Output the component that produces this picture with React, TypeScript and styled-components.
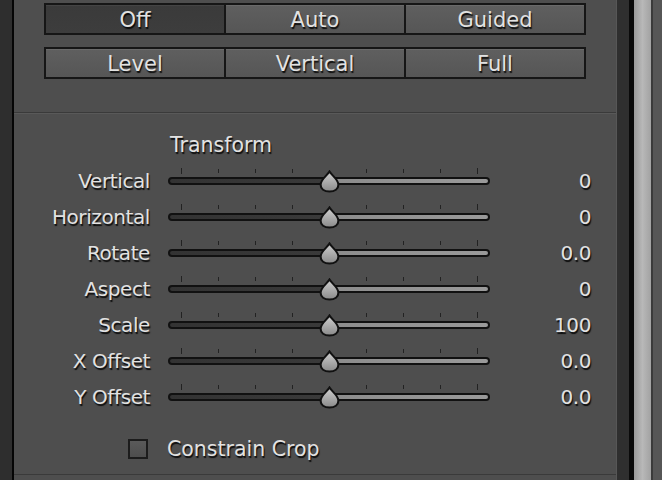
import styled, { createGlobalStyle } from 'styled-components';

const GlobalStyle = createGlobalStyle`
  *, *::before, *::after {
    box-sizing: border-box;
  }
  html, body {
    margin: 0;
    padding: 0;
    background: #4e4e4e;
  }
  body {
    font-family: "DejaVu Sans", "Liberation Sans", sans-serif;
  }
`;

const shadow = '1px 2px 1px rgba(0, 0, 0, 0.85)';

const Frame = styled.div`
  display: flex;
  width: 662px;
  height: 480px;
  overflow: hidden;
`;

const LeftEdge = styled.div`
  width: 14px;
  background: #2e2e2e;
  border-right: 2px solid #050505;
`;

const RightEdge = styled.div`
  display: flex;
  width: 45px;
`;

const Strip = styled.div<{ $w: number; $bg: string }>`
  width: ${(p) => p.$w}px;
  background: ${(p) => p.$bg};
`;

const Panel = styled.div`
  flex: 1;
  display: flex;
  flex-direction: column;
  background: #4e4e4e;
  border-right: 1px solid #575757;
`;

const TopSection = styled.div`
  display: flex;
  flex-direction: column;
  gap: 12px;
  padding: 3px 30px 33px;
  border-bottom: 1px solid #3a3a3a;
  box-shadow: 0 1px 0 #595959;
`;

const ButtonGroup = styled.div`
  display: grid;
  grid-template-columns: repeat(3, 1fr);
  height: 32px;
  border: 2px solid #161616;
  background: #161616;
  gap: 2px;
`;

const SegButton = styled.div<{ $active?: boolean }>`
  display: flex;
  align-items: center;
  justify-content: center;
  padding-top: 2px;
  font-size: 21px;
  color: #e2e2e2;
  text-shadow: ${shadow};
  box-shadow: inset 0 1px 0 ${(p) => (p.$active ? '#444' : '#6a6a6a')};
  background: ${(p) =>
    p.$active
      ? 'linear-gradient(#3a3a3a, #3d3d3d)'
      : 'linear-gradient(#5f5f5f, #565656)'};
`;

const TransformSection = styled.div`
  display: flex;
  flex-direction: column;
  padding-top: 20px;
  border-bottom: 1px solid #3a3a3a;
  height: 362px;
`;

const SectionTitle = styled.div`
  height: 24px;
  line-height: 24px;
  padding-left: 156px;
  font-size: 20.5px;
  color: #e2e2e2;
  text-shadow: ${shadow};
  margin-bottom: 5px;
`;

const Row = styled.div`
  display: grid;
  grid-template-columns: 136px 322px 83px;
  column-gap: 18px;
  height: 36px;
  align-items: center;
`;

const Label = styled.div`
  text-align: right;
  font-size: 20px;
  letter-spacing: -0.4px;
  line-height: 36px;
  padding-top: 1px;
  color: #e2e2e2;
  text-shadow: ${shadow};
`;

const SliderBox = styled.div`
  position: relative;
  height: 36px;
`;

const Ticks = styled.div`
  display: flex;
  justify-content: space-between;
  padding: 0 12px 0 13px;
  height: 11px;
  align-items: flex-end;
`;

const Tick = styled.span<{ $end?: boolean; $hidden?: boolean }>`
  width: 1px;
  height: ${(p) => (p.$end ? 6 : 4)}px;
  margin-bottom: ${(p) => (p.$end ? 0 : 1)}px;
  background: #222;
  opacity: ${(p) => (p.$hidden ? 0 : 1)};
`;

const Track = styled.div`
  margin-top: 3px;
  height: 8px;
  border: 2px solid #111;
  border-radius: 4px;
`;

const Thumb = styled.svg`
  position: absolute;
  top: 7px;
  width: 21px;
  height: 23px;
  margin-left: -10.5px;
`;

const CheckRow = styled.div`
  display: flex;
  align-items: center;
  gap: 19px;
  padding-left: 114px;
  margin-top: 23px;
  height: 24px;
`;

const CheckBox = styled.div`
  width: 20px;
  height: 20px;
  border: 2px solid #1c1c1c;
  background: linear-gradient(#5a5a5a, #4e4e4e);
`;

const CheckLabel = styled.div`
  font-size: 20.5px;
  color: #e2e2e2;
  text-shadow: ${shadow};
`;

const rows = [
  { label: 'Vertical', value: '0', pos: 50 },
  { label: 'Horizontal', value: '0', pos: 50 },
  { label: 'Rotate', value: '0.0', pos: 50 },
  { label: 'Aspect', value: '0', pos: 50 },
  { label: 'Scale', value: '100', pos: 50 },
  { label: 'X Offset', value: '0.0', pos: 50 },
  { label: 'Y Offset', value: '0.0', pos: 50 },
];

const Slider = ({ pos }: { pos: number }) => (
  <SliderBox>
    <Ticks>
      {Array.from({ length: 9 }).map((_, i) => (
        <Tick key={i} $end={i === 0 || i === 8} $hidden={i === 4} />
      ))}
    </Ticks>
    <Track
      style={{
        background: `linear-gradient(to right, #333 0%, #3a3a3a ${pos}%, #8c8c8c ${pos}%, #9a9a9a 100%)`,
      }}
    />
    <Thumb viewBox="0 0 20 22" style={{ left: `${pos}%` }}>
      <defs>
        <linearGradient id="thumbFill" x1="0" y1="0" x2="0" y2="1">
          <stop offset="0" stopColor="#d0d0d0" />
          <stop offset="1" stopColor="#8a8a8a" />
        </linearGradient>
      </defs>
      <path
        d="M10 1.5 C12 5 18.5 9 18.5 14 C18.5 18 15 20.5 10 20.5 C5 20.5 1.5 18 1.5 14 C1.5 9 8 5 10 1.5 Z"
        fill="url(#thumbFill)"
        stroke="#111"
        strokeWidth="2"
      />
    </Thumb>
  </SliderBox>
);

export const App = () => {
  return (
    <Frame>
      <GlobalStyle />
      <LeftEdge />
      <Panel>
        <TopSection>
          <ButtonGroup>
            <SegButton $active>Off</SegButton>
            <SegButton>Auto</SegButton>
            <SegButton>Guided</SegButton>
          </ButtonGroup>
          <ButtonGroup>
            <SegButton>Level</SegButton>
            <SegButton>Vertical</SegButton>
            <SegButton>Full</SegButton>
          </ButtonGroup>
        </TopSection>
        <TransformSection>
          <SectionTitle>Transform</SectionTitle>
          {rows.map((r) => (
            <Row key={r.label}>
              <Label>{r.label}</Label>
              <Slider pos={r.pos} />
              <Label>{r.value}</Label>
            </Row>
          ))}
          <CheckRow>
            <CheckBox />
            <CheckLabel>Constrain Crop</CheckLabel>
          </CheckRow>
        </TransformSection>
      </Panel>
      <RightEdge>
        <Strip $w={12} $bg="#2f2f2f" />
        <Strip $w={5} $bg="#0a0a0a" />
        <Strip $w={17} $bg="linear-gradient(to right, #9a9a9a, #b8b8b8 50%, #a2a2a2)" />
        <Strip $w={2} $bg="#3a3a3a" />
        <Strip $w={9} $bg="#565656" />
      </RightEdge>
    </Frame>
  );
};

export default App;
